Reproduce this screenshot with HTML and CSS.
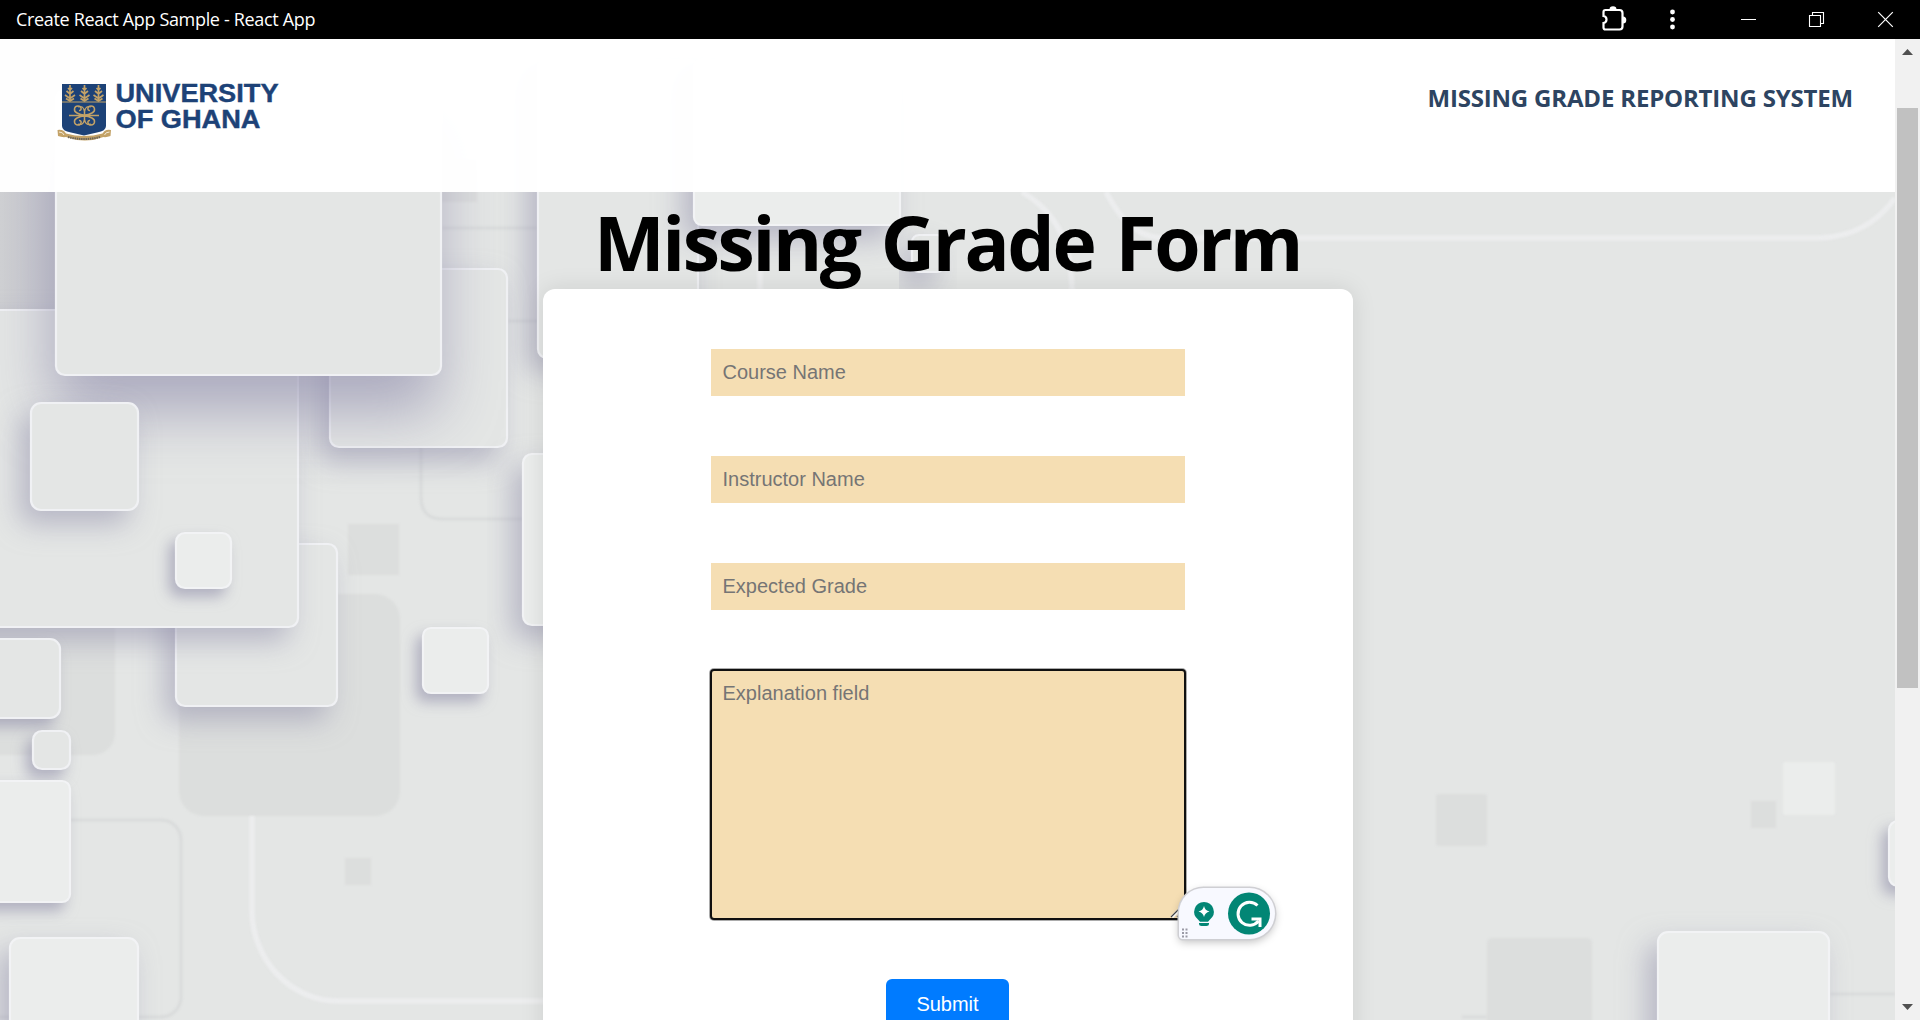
FILE: index.html
```html
<!DOCTYPE html>
<html lang="en">
<head>
<meta charset="utf-8">
<title>Create React App Sample - React App</title>
<link rel="stylesheet" href="styles.css">
</head>
<body>
<div class="window">
  <div class="titlebar">
    <span class="titlebar-text">Create React App Sample - React App</span>
    <svg class="titlebar-icons" width="320" height="39" viewBox="1600 0 320 39" fill="none" stroke="#fff">
      <path d="M1605.500 10h14q3 0 3 3v13.500q0 3-3 3h-14q-2 0-2-2v-4.500q3-.5 3-3.500t-3-3.500v-4q0-2 2-2z" stroke-width="2.200"/>
      <path d="M1609.500 9.500a3.500 3.300 0 0 1 7 0zM1623 16.500a3.300 3.500 0 0 1 0 7z" fill="#fff" stroke="none"/>
      <g fill="#fff" stroke="none"><circle cx="1672.500" cy="12" r="2.400"/><circle cx="1672.500" cy="19.500" r="2.400"/><circle cx="1672.500" cy="27" r="2.400"/></g>
      <path d="M1741 19.500h15"/>
      <path d="M1809.500 15.500h11v11h-11zM1812.500 15.500v-3h11v11h-3" stroke-width="1.100"/>
      <path d="M1878.200 12.200l14.600 14.600M1892.800 12.200l-14.600 14.600" stroke-width="1.200"/>
    </svg>
  </div>
  <div class="body">
    <main class="page">
      <svg class="backdrop" width="1895" height="981" viewBox="0 39 1895 981">
        <defs>
          <filter id="deep" x="-30%" y="-30%" width="160%" height="170%" color-interpolation-filters="sRGB"><feDropShadow dx="-4" dy="36" stdDeviation="30" flood-color="#908eac" flood-opacity=".68"/></filter>
          <filter id="mid" x="-40%" y="-40%" width="180%" height="190%" color-interpolation-filters="sRGB"><feDropShadow dx="-10" dy="13" stdDeviation="14" flood-color="#8c8aa6" flood-opacity=".52"/></filter>
          <filter id="small" x="-60%" y="-60%" width="220%" height="220%" color-interpolation-filters="sRGB"><feDropShadow dx="-6" dy="8" stdDeviation="7" flood-color="#8c8aa6" flood-opacity=".58"/></filter>
          <filter id="soft" x="-5%" y="-5%" width="110%" height="110%" color-interpolation-filters="sRGB"><feGaussianBlur stdDeviation="1"/></filter>
          <linearGradient id="shade" x1="0" x2="1" y1="0" y2="0"><stop offset="0" stop-color="#d0d1d3"/><stop offset="1" stop-color="#c6c7ce"/></linearGradient>
        </defs>
        <rect y="39" width="1895" height="981" fill="#e4e6e5"/>
        <rect y="39" width="70" height="270" fill="url(#shade)"/>
        <g filter="url(#soft)" fill="#dcdedd">
          <rect x="-30" y="560" width="145" height="195" rx="22"/>
          <rect x="179" y="594" width="221" height="222" rx="25"/>
          <rect x="348" y="524" width="51" height="51"/>
          <rect x="345" y="858" width="26" height="27"/>
          <rect x="430" y="160" width="47" height="42"/>
          <rect x="1436" y="794" width="51" height="52" rx="3"/>
          <rect x="1751" y="801" width="25" height="27"/>
          <rect x="1487" y="938" width="105" height="100" rx="5"/>
          <rect x="1783" y="762" width="52" height="53" rx="2" fill="#ebedec"/>
        </g>
        <g filter="url(#soft)" fill="none" stroke="#d9dbdb" stroke-width="3">
          <path d="M442 228h95M508 321h30M421 440v57q0 22 22 22h90M1462 1017h25M1830 994h65"/>
          <rect x="-30" y="820" width="211" height="197" rx="20"/>
        </g>
        <g filter="url(#soft)" fill="none" stroke="#ecedee" stroke-width="5.500">
          <path d="M252 816v95c0 48 38 90 86 90h220M1106 192c12 22 26 46 60 46h654q48-2 75-40M1022 192c34 20 50 50 50 100M760 226v70" />
        </g>
        <g stroke="#f0f1f4" stroke-width="2.200" fill="#e4e6e5">
          <rect x="538" y="60" width="160" height="298" rx="9" filter="url(#mid)"/>
          <rect x="330" y="269" width="177" height="178" rx="9" filter="url(#mid)"/>
          <rect x="176" y="544" width="161" height="162" rx="9" filter="url(#mid)"/>
          <rect x="-30" y="310" width="328" height="317" rx="9" filter="url(#mid)"/>
          <rect x="56" y="90" width="385" height="285" rx="9" filter="url(#deep)"/>
          <rect x="31" y="403" width="107" height="107" rx="10" filter="url(#mid)"/>
          <rect x="-30" y="639" width="90" height="79" rx="10" filter="url(#small)"/>
          <rect x="33" y="731" width="37" height="38" rx="9" filter="url(#small)"/>
          <rect x="912" y="235" width="32" height="37" rx="7" filter="url(#mid)"/>
        </g>
        <g stroke="#f2f3f5" stroke-width="2.200" fill="#ebedec">
          <rect x="694" y="60" width="206" height="165" rx="8" filter="url(#mid)"/>
          <rect x="176" y="533" width="55" height="55" rx="9" filter="url(#small)"/>
          <rect x="523" y="454" width="90" height="171" rx="9" filter="url(#mid)"/>
          <rect x="423" y="628" width="65" height="65" rx="8" filter="url(#small)"/>
          <rect x="-30" y="781" width="100" height="121" rx="8" filter="url(#small)"/>
          <rect x="10" y="938" width="128" height="120" rx="10" filter="url(#mid)"/>
          <rect x="1658" y="932" width="171" height="170" rx="10" filter="url(#mid)"/>
          <rect x="1889" y="821" width="65" height="65" rx="9" filter="url(#small)"/>
        </g>
      </svg>
      <header class="header">
        <svg class="logo" width="236" height="72" viewBox="56 73 236 72">
          <path d="M62 84h44v42q0 5-9 6.500l-13 3-13-3q-9-1.500-9-6.500z" fill="#1d4277"/>
          <path d="M62 102h44" stroke="#c3a267"/>
          <g fill="none" stroke="#c3a267" stroke-width="1.700">
            <g id="tree"><path d="M70 85v17M66.500 91l3.500 3 3.500-3M65 95l5 3.500 5-3.500M66 98.500l4 2.500 4-2.500M68 88l2 2 2-2"/></g>
            <use href="#tree" x="14.500"/><use href="#tree" x="28.500"/>
          </g>
          <g fill="none" stroke="#c3a267" stroke-width="1.500">
            <path d="M69 115.500h30M84.500 109v13M84 115c-2 0-5-1-7-2-4-2-3-7 1-7 4 0 4 5 1 4.500M85 115c2 0 5-1 7-2 4-2 3-7-1-7-4 0-4 5-1 4.500M84 116c-2 0-5 1-7 2-4 2-3 7 1 7 4 0 4-5 1-4.500M85 116c2 0 5 1 7 2 4 2 3 7-1 7-4 0-4-5-1-4.500"/>
            <path d="M78 107q5-2 6.500 4 1.500-6 6.500-4M78 124q5 2 6.500-4 1.500 6 6.500 4" stroke-width="1.200"/>
          </g>
          <path d="M57.500 130q3-1 6.500 1l2 2.500q18 5 36.500 0l2-2.500q3-2 6.500-1l-.5 6q-4 1.500-7 1-18.500 7-37.500 0-4 .5-8-1z" fill="#c3a267"/>
          <path d="M59 132q4 0 5 3M109.500 132q-4 0-5 3" stroke="#f3ead6" fill="none"/>
          <path d="M68 137q16 4 32 0" stroke="#6d6658" stroke-width="2" stroke-dasharray="1.500 .7" fill="none"/>
          <g class="logo-text"><text x="115.500" y="101.800" textLength="163" lengthAdjust="spacingAndGlyphs">UNIVERSITY</text><text x="115.500" y="127.500" textLength="145" lengthAdjust="spacingAndGlyphs">OF GHANA</text></g>
        </svg>
        <div class="system-name">MISSING GRADE REPORTING SYSTEM</div>
      </header>
      <h1 class="heading">Missing Grade Form</h1>
      <form class="card">
        <input class="field" type="text" placeholder="Course Name">
        <input class="field" type="text" placeholder="Instructor Name">
        <input class="field" type="text" placeholder="Expected Grade">
        <textarea class="field field-area" placeholder="Explanation field"></textarea>
        <button class="submit" type="button">Submit</button>
      </form>
      <svg class="grip" width="14" height="14" viewBox="0 0 14 14"><path d="M2 13L13 2M8 13l5-5" stroke="#fff" stroke-width="3"/><path d="M1 13L13 1M7 13l6-6" stroke="#444" stroke-width="1.200"/></svg>
      <div class="assistant">
        <svg width="96" height="51" viewBox="1179 887.500 96 51">
          <path d="M1204 901.500a9.800 9.800 0 0 1 6 17.500l-2 2.200h-8l-2-2.200a9.800 9.800 0 0 1 6-17.500zM1199 922.500h10v1q0 2-2.500 2h-5q-2.500 0-2.500-2z" fill="#028675"/>
          <path d="M1204 905.500q1 4.500 5.500 5.500-4.500 1-5.500 5.500-1-4.500-5.500-5.500 4.500-1 5.500-5.500z" fill="#fff"/>
          <circle cx="1249" cy="913" r="21" fill="#028675"/>
          <path d="M1257.500 905a11.500 11.500 0 1 0 1 15.500" fill="none" stroke="#fff" stroke-width="3"/>
          <path d="M1251.500 918.500h8.500v8" fill="none" stroke="#fff" stroke-width="3"/>
          <g fill="#9a9aa5"><path d="M1182 928h2v2h-2zM1185.500 928h2v2h-2zM1182 931.500h2v2h-2zM1185.500 931.500h2v2h-2zM1182 935h2v2h-2zM1185.500 935h2v2h-2z"/></g>
        </svg>
      </div>
    </main>
    <div class="scrollbar">
      <svg width="25" height="25"><path d="M7 16h11l-5.500-6z" fill="#505050"/></svg>
      <div class="thumb"></div>
      <svg width="25" height="25"><path d="M7 9h11l-5.500 6z" fill="#505050"/></svg>
    </div>
  </div>
</div>
</body>
</html>
```
FILE: styles.css
```css
* { box-sizing: border-box; }
body { margin: 0; overflow: hidden; }
.window { width: 1920px; height: 1020px; display: flex; flex-direction: column; overflow: hidden; }
.titlebar {
  height: 39px; background: #000; color: #fff;
  display: flex; align-items: center; justify-content: space-between;
  padding-left: 16px; font: 18px/39px "Open Sans", "Noto Sans", sans-serif; letter-spacing: -0.33px;
}
.titlebar-icons { display: block; }
.body { display: flex; height: 981px; }
.page {
  position: relative; width: 1895px; height: 981px; overflow: hidden;
  display: flex; flex-direction: column; align-items: center; background: #e4e6e5;
}
.backdrop { position: absolute; left: 0; top: 0; }
.header {
  position: relative; width: 100%; height: 153px; flex: none;
  padding: 34px 42px 0 56px; background: rgba(255, 255, 255, .975);
  display: flex; justify-content: space-between; align-items: flex-start;
}
.logo { display: block; }
.logo-text {
  font: bold 25px "Liberation Sans", Arial, sans-serif;
  fill: #1d4277; stroke: #1d4277; stroke-width: .4px;
}
.system-name {
  margin-top: 8px; font: 700 24px/34px "Open Sans", "Noto Sans", sans-serif;
  color: #2d4461; white-space: nowrap; letter-spacing: -0.18px;
}
.heading {
  position: relative; z-index: 1; margin: 0; height: 97px; flex: none; white-space: nowrap;
  font: 700 75px/100px "Open Sans", "Noto Sans", sans-serif; color: #000;
  letter-spacing: -2.4px; word-spacing: 4px;
}
.card {
  position: relative; width: 810px; height: 800px; flex: none; padding-top: 60px;
  background: #fff; border-radius: 12px; box-shadow: 0 0 25px rgba(0, 0, 0, .1);
  display: flex; flex-direction: column; align-items: center; gap: 60px;
}
.field {
  width: 474px; height: 47px; flex: none; margin: 0; padding: 0 12px;
  border: 0; border-radius: 0; background: #f5deb3; color: #222;
  font: 20px/23px "Liberation Sans", Arial, sans-serif;
}
.field::placeholder { color: #757575; opacity: 1; }
.field-area {
  height: 249px; padding-top: 12px; resize: none; border-radius: 3px;
  outline: 2px solid #101010; outline-offset: -1px; box-shadow: 0 0 0 2px rgba(16, 16, 16, .35);
}
.submit {
  width: 123px; height: 53px; flex: none; border: 0; border-radius: 6px; padding: 0 0 2px;
  background: #007bff; color: #fff; font: 20px "Liberation Sans", Arial, sans-serif;
}
.grip { position: absolute; left: 1170px; top: 865px; }
.assistant {
  position: absolute; left: 1179px; top: 848.5px; width: 96px; height: 51px;
  background: #f8f9ff; border-radius: 25px 26px 26px 4px;
  box-shadow: 0 0 0 1.5px #cfcfd3, 0 3px 8px rgba(0, 0, 0, .25);
}
.assistant svg { display: block; }
.scrollbar {
  width: 25px; height: 981px; background: #f1f1f1; display: flex;
  flex-direction: column; align-items: center;
}
.thumb { width: 21px; height: 580px; margin: 44px 0 auto; background: #c1c1c1; }
.scrollbar svg { flex: none; display: block; }
```
